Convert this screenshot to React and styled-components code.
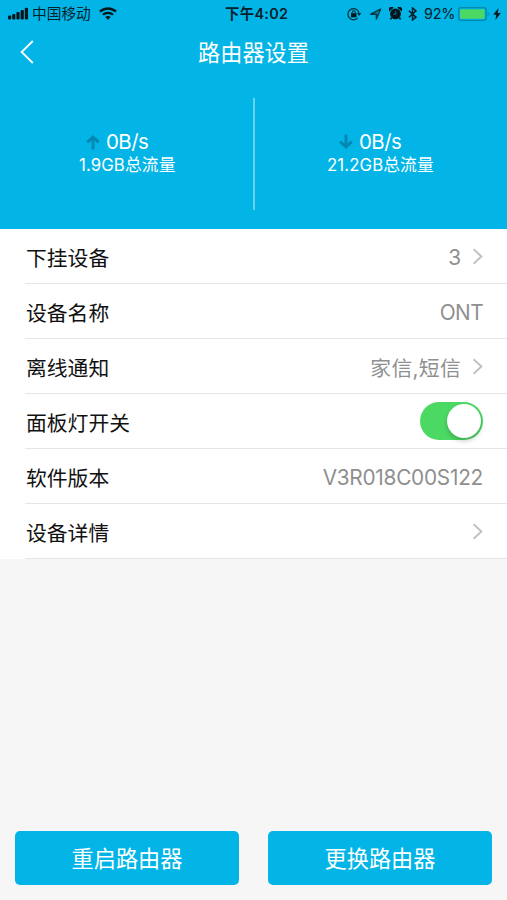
import React, { useState } from 'react';
import styled, { createGlobalStyle } from 'styled-components';

const GlobalStyle = createGlobalStyle`
    * {
        box-sizing: border-box;
    }
    body {
        margin: 0;
        background: #f6f6f6;
        font-family: Inter, "Noto Sans CJK SC", sans-serif;
    }
    button {
        font-family: inherit;
        border: 0;
        padding: 0;
    }
    svg {
        display: block;
        flex: none;
    }
`;

const Page = styled.div`
    display: flex;
    flex-direction: column;
    width: 100%;
    height: 900px;
    background: #f6f6f6;
`;

const Header = styled.header`
    height: 229px;
    background: #02b5e6;
    color: #fff;
`;

const StatusBar = styled.div`
    display: grid;
    grid-template-columns: 217px 80px 1fr;
    height: 27px;
    color: #03222c;
`;

const StatusGroup = styled.div`
    display: flex;
    align-items: center;
    padding-left: ${({ $left }) => $left}px;
`;

const StatusText = styled.span`
    width: ${({ $width }) => $width}px;
    margin-left: ${({ $gap }) => $gap || 0}px;
    padding-top: ${({ $top }) => $top || 0}px;
    font-size: ${({ $size }) => $size}px;
    font-weight: ${({ $weight }) => $weight || 400};
    letter-spacing: ${({ $spacing }) => $spacing || 0}px;
    line-height: 25px;
    white-space: nowrap;
`;

const StatusIcon = styled.svg`
    margin-left: ${({ $gap }) => $gap || 0}px;
`;

const NavBar = styled.div`
    display: grid;
    grid-template-columns: 60px 1fr 60px;
    height: 50px;
`;

const BackButton = styled.button`
    height: 50px;
    padding-left: 20px;
    background: transparent;
`;

const Title = styled.h1`
    margin: 0;
    font-size: 22.2px;
    font-weight: 400;
    line-height: 52px;
    text-align: center;
`;

const Traffic = styled.div`
    display: grid;
    grid-template-columns: 253px 2px 252px;
    height: 112px;
    margin-top: 21px;
`;

const Separator = styled.div`
    background: #66d3f0;
`;

const TrafficItem = styled.div`
    display: flex;
    flex-direction: column;
    padding: 32px 0 0 ${({ $left }) => $left}px;
`;

const Speed = styled.div`
    display: flex;
    align-items: center;
    gap: 6px;
    height: 24px;
    padding-left: ${({ $indent }) => $indent}px;
    font-size: 20.4px;
    letter-spacing: -0.5px;
    line-height: 24px;
`;

const Total = styled.div`
    height: 22px;
    font-size: 16.8px;
    letter-spacing: 0.1px;
    line-height: 22px;
    white-space: nowrap;
`;

const List = styled.div`
    height: 330px;
    padding-left: 25px;
    background: #fff;
`;

const Row = styled.div`
    display: flex;
    align-items: center;
    justify-content: space-between;
    height: 55px;
    padding-right: 24px;
    border-bottom: 1px solid #e6e6e6;
`;

const Label = styled.span`
    padding: 6px 0 0 1px;
    font-size: 20.8px;
    line-height: 48px;
    color: #111;
`;

const Value = styled.span`
    display: flex;
    align-items: center;
    gap: 11px;
    font-size: 20.8px;
    letter-spacing: ${({ $spacing }) => $spacing || 0}px;
    line-height: 50px;
    color: #8f8f8f;
`;

const ValueText = styled.span`
    padding-top: ${({ $top }) => $top || 3}px;
`;

const Toggle = styled.button`
    display: flex;
    align-items: center;
    justify-content: ${({ $on }) => ($on ? 'flex-end' : 'flex-start')};
    width: 63px;
    height: 38px;
    padding: 0 2px;
    border-radius: 19px;
    background: ${({ $on }) => ($on ? '#4bd964' : '#e5e5e5')};
`;

const Knob = styled.span`
    width: 34.5px;
    height: 34.5px;
    border-radius: 50%;
    background: #fff;
    box-shadow: 0 3px 5px rgba(0, 0, 0, 0.2);
`;

const Footer = styled.footer`
    display: grid;
    grid-template-columns: 1fr 1fr;
    gap: 29px;
    margin-top: auto;
    padding: 0 15px 15px;
`;

const ActionButton = styled.button`
    height: 54px;
    padding-top: 2px;
    border-radius: 5px;
    background: #02b5e6;
    color: #fff;
    font-size: 22.2px;
    line-height: 52px;
`;

const SignalIcon = () => (
    <StatusIcon width="21" height="13" viewBox="0 0 21 13" fill="#03161c">
        <rect x="0" y="8.5" width="3.2" height="4" rx="1" />
        <rect x="4.2" y="7" width="3.2" height="5.5" rx="1" />
        <rect x="8.4" y="5" width="3.2" height="7.5" rx="1" />
        <rect x="12.6" y="3" width="3.2" height="9.5" rx="1" />
        <rect x="16.8" y="0.7" width="3.2" height="11.8" rx="1" />
    </StatusIcon>
);

const WifiIcon = () => (
    <StatusIcon $gap={7} width="18" height="13" viewBox="0 0 18 13" fill="none" stroke="#03161c">
        <path d="M1 4.7C5.4 .4 12.6 .4 17 4.7" strokeWidth="2.4" />
        <path d="M3.9 7.8C6.7 5.1 11.3 5.1 14.1 7.8" strokeWidth="2.2" />
        <path d="M9 12.8 6.2 10C7.8 8.6 10.2 8.6 11.8 10Z" fill="#03161c" stroke="none" />
    </StatusIcon>
);

const LockIcon = () => (
    <StatusIcon width="15" height="14" viewBox="0 0 15 14" fill="none" stroke="#03303e">
        <path d="M10.8 10.9A5.6 5.6 0 1 1 12 5.8" strokeWidth="1.3" />
        <path d="M9.8 6H14.4L12.1 9.1Z" fill="#03303e" stroke="none" />
        <rect x="4" y="6.2" width="5.4" height="4.1" fill="#03161c" stroke="none" />
        <path d="M5.2 6.4V5.2a1.5 1.5 0 0 1 3 0V6.4" strokeWidth="1.1" />
    </StatusIcon>
);

const LocationIcon = () => (
    <StatusIcon $gap={8} width="12" height="12" viewBox="0 0 12 12">
        <path d="M.8 6.2 10.6 1 6.4 11V6.2Z" fill="#033646" fillOpacity="0.35" stroke="#033646" strokeWidth="1.4" strokeLinejoin="round" />
    </StatusIcon>
);

const AlarmIcon = () => (
    <StatusIcon $gap={7} width="13" height="13" viewBox="0 0 13 13" fill="#03161c">
        <circle cx="6.5" cy="6.9" r="5.4" />
        <path d="M.2 4.4A2.6 2.6 0 0 1 4.6.8ZM12.8 4.4A2.6 2.6 0 0 0 8.4.8Z" />
        <path d="M2.6 10.6 1.5 12.5M10.4 10.6 11.5 12.5" stroke="#03161c" strokeWidth="1.5" />
        <path d="M6.8 4.2V7.2H4.4" fill="none" stroke="#0290b8" strokeWidth="0.9" />
    </StatusIcon>
);

const BluetoothIcon = () => (
    <StatusIcon $gap={6} width="9" height="14" viewBox="0 0 9 14">
        <path d="M.9 3.8 7.9 10.1 4.5 13V1L7.9 3.9 .9 10.2" fill="none" stroke="#03222c" strokeWidth="1.5" />
    </StatusIcon>
);

const BatteryIcon = () => (
    <StatusIcon $gap={4} width="32" height="14" viewBox="0 0 32 14">
        <rect x="0.7" y="0.7" width="27.4" height="12.6" rx="2.4" fill="none" stroke="#0387ac" strokeWidth="1.3" />
        <rect x="2.2" y="2.2" width="24.4" height="9.6" rx="1" fill="#4bd964" />
        <path d="M29.6 5A2.2 2.2 0 0 1 29.6 9Z" fill="#0387ac" />
    </StatusIcon>
);

const BoltIcon = () => (
    <StatusIcon $gap={3} width="8" height="12" viewBox="0 0 8 12">
        <path d="M5.6 0 .2 6.8H3.3L2.4 12 7.8 5.1H4.7Z" fill="#03161c" />
    </StatusIcon>
);

const Arrow = ({ down }) => (
    <svg width="14" height="16" viewBox="0 0 14 16" fill="none" stroke="#0288b3" strokeWidth="3">
        {down ? <path d="M7 .5V13M1.2 7.6 7 13 12.8 7.6" /> : <path d="M7 15.5V3M1.2 8.4 7 3 12.8 8.4" />}
    </svg>
);

const Chevron = () => (
    <svg width="11" height="17" viewBox="0 0 11 17">
        <path d="M1.6 1.2 9.4 8.5 1.6 15.8" fill="none" stroke="#c0c0c0" strokeWidth="1.9" />
    </svg>
);

const App = () => {
    const [lightOn, setLightOn] = useState(true);

    return (
        <Page>
            <GlobalStyle />
            <Header>
                <StatusBar>
                    <StatusGroup $left={8}>
                        <SignalIcon />
                        <StatusText $size={14.7} $width={60} $gap={3} $top={2}>中国移动</StatusText>
                        <WifiIcon />
                    </StatusGroup>
                    <StatusGroup $left={8}>
                        <StatusText $size={14.4} $width={65} $weight={600} $spacing={0.3}>下午4:02</StatusText>
                    </StatusGroup>
                    <StatusGroup $left={50}>
                        <LockIcon />
                        <LocationIcon />
                        <AlarmIcon />
                        <BluetoothIcon />
                        <StatusText $size={14.4} $width={30} $gap={7} $spacing={-0.2}>92%</StatusText>
                        <BatteryIcon />
                        <BoltIcon />
                    </StatusGroup>
                </StatusBar>
                <NavBar>
                    <BackButton aria-label="返回">
                        <svg width="14" height="24" viewBox="0 0 14 24">
                            <path d="M12.8 1 1.6 12 12.8 23" fill="none" stroke="#fff" strokeWidth="1.8" />
                        </svg>
                    </BackButton>
                    <Title>路由器设置</Title>
                </NavBar>
                <Traffic>
                    <TrafficItem $left={79}>
                        <Speed $indent={7}><Arrow />0B/s</Speed>
                        <Total>1.9GB总流量</Total>
                    </TrafficItem>
                    <Separator />
                    <TrafficItem $left={72}>
                        <Speed $indent={12}><Arrow down />0B/s</Speed>
                        <Total>21.2GB总流量</Total>
                    </TrafficItem>
                </Traffic>
            </Header>
            <List>
                <Row>
                    <Label>下挂设备</Label>
                    <Value><ValueText>3</ValueText><Chevron /></Value>
                </Row>
                <Row>
                    <Label>设备名称</Label>
                    <Value $spacing={-0.6}><ValueText>ONT</ValueText></Value>
                </Row>
                <Row>
                    <Label>离线通知</Label>
                    <Value $spacing={0.3}><ValueText $top={5}>家信,短信</ValueText><Chevron /></Value>
                </Row>
                <Row>
                    <Label>面板灯开关</Label>
                    <Toggle $on={lightOn} aria-label="面板灯开关" onClick={() => setLightOn(!lightOn)}>
                        <Knob />
                    </Toggle>
                </Row>
                <Row>
                    <Label>软件版本</Label>
                    <Value $spacing={-0.25}><ValueText>V3R018C00S122</ValueText></Value>
                </Row>
                <Row>
                    <Label>设备详情</Label>
                    <Value><Chevron /></Value>
                </Row>
            </List>
            <Footer>
                <ActionButton>重启路由器</ActionButton>
                <ActionButton>更换路由器</ActionButton>
            </Footer>
        </Page>
    );
};

export default App;
